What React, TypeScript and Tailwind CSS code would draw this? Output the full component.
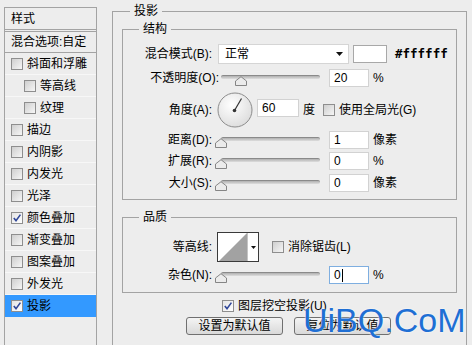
import React from "react";

const font = "font-['Liberation_Sans','Noto_Sans_CJK_SC',sans-serif]";

function CheckBox({ checked = false }: { checked?: boolean }) {
  return (
    <span
      className={`flex h-[12px] w-[12px] shrink-0 items-center justify-center border border-[#8e8e8e] ${
        checked ? "bg-gradient-to-br from-[#e4e4e4] to-white" : "bg-gradient-to-br from-[#cfcfcf] to-[#f6f6f6]"
      }`}
    >
      {checked && (
        <svg width="10" height="10" viewBox="0 0 10 10">
          <path d="M1.8 5 L4 7.6 L8.4 1.6" stroke="#31489a" strokeWidth="1.6" fill="none" />
        </svg>
      )}
    </span>
  );
}

function Slider({ value }: { value: number }) {
  return (
    <div className="relative h-[20px] w-[99px] shrink-0">
      <div className="absolute left-0 right-0 top-[7px] h-[4px] rounded-full border-t border-[#8a8a8a] bg-gradient-to-b from-[#b0b0b0] to-[#dedede]" />
      <svg className="absolute top-[8px]" style={{ left: value * 99 - 6 }} width="12" height="10" viewBox="0 0 12 10">
        <path d="M0.5 9.5 V5 L6 0.7 L11.5 5 V9.5 Z" fill="#ebebeb" stroke="#858585" />
      </svg>
    </div>
  );
}

function NumInput({ value, w = "w-[40px]", focused = false }: { value: string; w?: string; focused?: boolean }) {
  return (
    <div
      className={`flex h-[18px] ${w} shrink-0 items-center border bg-white pl-[4px] text-[12px] text-black ${
        focused ? "border-[#7eaee0]" : "border-[#d2d2d2]"
      }`}
    >
      {value}
      {focused && <span className="ml-[1px] h-[13px] w-[1px] bg-black" />}
    </div>
  );
}

function Label({ text, w = "w-[89px]" }: { text: string; w?: string }) {
  return <span className={`${w} shrink-0 text-right text-[12px] leading-[14px]`}>{text}</span>;
}

const styles: { name: string; checked?: boolean; indent?: boolean; active?: boolean }[] = [
  { name: "斜面和浮雕" },
  { name: "等高线", indent: true },
  { name: "纹理", indent: true },
  { name: "描边" },
  { name: "内阴影" },
  { name: "内发光" },
  { name: "光泽" },
  { name: "颜色叠加", checked: true },
  { name: "渐变叠加" },
  { name: "图案叠加" },
  { name: "外发光" },
  { name: "投影", checked: true, active: true },
];

export default function App() {
  return (
    <div className={`relative flex h-[345px] w-[472px] overflow-hidden bg-[#ededed] text-black ${font}`}>
      {/* left style list */}
      <div className="ml-[4px] mt-[7px] h-[360px] w-[93px] shrink-0 border border-[#a3a3a3]">
        <div className="flex h-[22px] items-center border-b border-[#a3a3a3] pl-[6px] text-[12px]">样式</div>
        <div className="mt-[1px] flex h-[22px] items-center border-y border-[#a3a3a3] pl-[6px] text-[12px]">
          混合选项:自定
        </div>
        {styles.map((s) => (
          <div
            key={s.name}
            className={`flex h-[22px] items-center gap-[4px] border-b text-[12px] ${
              s.indent ? "pl-[19px]" : "pl-[6px]"
            } ${s.active ? "border-[#3399ff] bg-[#3399ff]" : "border-[#f7f7f7]"}`}
          >
            <CheckBox checked={s.checked} />
            <span>{s.name}</span>
          </div>
        ))}
      </div>

      {/* drop shadow settings */}
      <fieldset className="ml-[15px] mt-[3px] h-[360px] w-[355px] shrink-0 border border-[#a3a3a3]">
        <legend className="ml-[17px] px-[4px] text-[12px] leading-[16px]">投影</legend>

        <fieldset className="mx-[9px] mt-[2px] border border-[#a3a3a3] pb-[6px] pt-[7px]">
          <legend className="ml-[16px] px-[4px] text-[12px] leading-[16px]">结构</legend>

          <div className="flex h-[20px] items-center">
            <Label text="混合模式(B):" />
            <div className="ml-[6px] flex h-[20px] w-[131px] items-center justify-between border border-[#d5d5d5] bg-white pl-[6px] pr-[5px] text-[12px]">
              <span>正常</span>
              <svg width="7" height="4" viewBox="0 0 7 4">
                <path d="M0 0 H7 L3.5 4 Z" fill="#111" />
              </svg>
            </div>
            <div className="ml-[4px] h-[18px] w-[34px] border border-[#a8a8a8] bg-white" />
            <span className="ml-[8px] font-['DejaVu_Sans_Mono',monospace] text-[12.5px] font-bold">#ffffff</span>
          </div>

          <div className="mt-[4px] flex h-[20px] items-center">
            <Label text="不透明度(O):" w="w-[96px]" />
            <div className="ml-[2px]">
              <Slider value={0.2} />
            </div>
            <div className="ml-[9px]">
              <NumInput value="20" />
            </div>
            <span className="ml-[4px] text-[12px]">%</span>
          </div>

          <div className="mt-[4px] flex h-[36px] items-center">
            <Label text="角度(A):" />
            <svg className="ml-[5px] shrink-0" width="36" height="36" viewBox="0 0 36 36">
              <defs>
                <radialGradient id="dial" cx="40%" cy="35%" r="70%">
                  <stop offset="0%" stopColor="#ffffff" />
                  <stop offset="100%" stopColor="#dcdcdc" />
                </radialGradient>
              </defs>
              <circle cx="18" cy="18" r="17" fill="url(#dial)" stroke="#8c8c8c" />
              <line x1="17.5" y1="18.5" x2="24.5" y2="6.5" stroke="#333" strokeWidth="1.2" />
              <circle cx="17.5" cy="18.5" r="1.8" fill="#333" />
            </svg>
            <div className="ml-[4px] -mt-[4px]">
              <NumInput value="60" w="w-[42px]" />
            </div>
            <span className="ml-[4px] text-[12px]">度</span>
            <span className="ml-[8px] flex items-center gap-[4px] text-[12px]">
              <CheckBox />
              使用全局光(G)
            </span>
          </div>

          <div className="mt-[2px] flex h-[20px] items-center">
            <Label text="距离(D):" />
            <div className="ml-[9px]">
              <Slider value={0} />
            </div>
            <div className="ml-[9px]">
              <NumInput value="1" />
            </div>
            <span className="ml-[4px] text-[12px]">像素</span>
          </div>

          <div className="mt-[1px] flex h-[20px] items-center">
            <Label text="扩展(R):" />
            <div className="ml-[9px]">
              <Slider value={0} />
            </div>
            <div className="ml-[9px]">
              <NumInput value="0" />
            </div>
            <span className="ml-[4px] text-[12px]">%</span>
          </div>

          <div className="mt-[2px] flex h-[20px] items-center">
            <Label text="大小(S):" />
            <div className="ml-[9px]">
              <Slider value={0} />
            </div>
            <div className="ml-[9px]">
              <NumInput value="0" />
            </div>
            <span className="ml-[4px] text-[12px]">像素</span>
          </div>
        </fieldset>

        <fieldset className="mx-[9px] mt-[9px] border border-[#a3a3a3] pb-[7px] pt-[7px]">
          <legend className="ml-[16px] px-[4px] text-[12px] leading-[16px]">品质</legend>

          <div className="flex h-[30px] items-center">
            <Label text="等高线:" />
            <div className="ml-[5px] flex h-[30px] w-[42px] shrink-0 border border-[#3a3a3a] bg-white">
              <svg width="29" height="28" viewBox="0 0 29 28">
                <path d="M1 28 L29 0 V28 Z" fill="#a2a2a2" />
              </svg>
              <div className="flex flex-1 items-center justify-center border-l border-[#c4c4c4]">
                <svg width="5" height="3" viewBox="0 0 5 3">
                  <path d="M0 0 H5 L2.5 3 Z" fill="#111" />
                </svg>
              </div>
            </div>
            <span className="ml-[13px] flex items-center gap-[4px] text-[12px]">
              <CheckBox />
              消除锯齿(L)
            </span>
          </div>

          <div className="mt-[3px] flex h-[20px] items-center">
            <Label text="杂色(N):" />
            <div className="ml-[9px]">
              <Slider value={0} />
            </div>
            <div className="ml-[9px]">
              <NumInput value="0" focused />
            </div>
            <span className="ml-[4px] text-[12px]">%</span>
          </div>
        </fieldset>

        <div className="mt-[6px] flex h-[14px] items-center gap-[4px] pl-[109px] text-[12px]">
          <CheckBox checked />
          图层挖空投影(U)
        </div>

        <div className="mt-[4px] flex gap-[11px] pl-[73px]">
          <button className="flex h-[18px] w-[97px] items-center justify-center rounded-[3px] border border-[#707070] bg-gradient-to-b from-[#f4f4f4] to-[#d9d9d9] text-[12px]">
            设置为默认值
          </button>
          <button className="flex h-[18px] w-[97px] items-center justify-center rounded-[3px] border border-[#707070] bg-gradient-to-b from-[#f4f4f4] to-[#d9d9d9] text-[12px]">
            复位为默认值
          </button>
        </div>
      </fieldset>

      {/* watermark */}
      <span className="absolute left-[303px] top-[303px] font-['Liberation_Sans',sans-serif] text-[34px] leading-[34px] text-[#1f6fd4] [text-shadow:0_0_2px_#ffffff]">
        UiBQ.CoM
      </span>
    </div>
  );
}
